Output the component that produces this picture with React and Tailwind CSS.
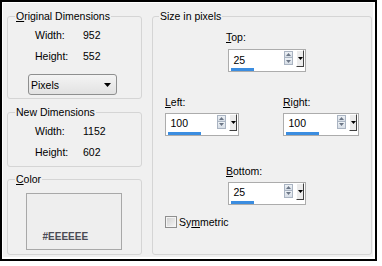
import React from "react";

function SpinUp() {
  return (
    <svg width="5" height="3" viewBox="0 0 5 3">
      <path d="M0 3L2.5 0L5 3Z" fill="#6b7686" />
    </svg>
  );
}
function SpinDown() {
  return (
    <svg width="5" height="3" viewBox="0 0 5 3">
      <path d="M0 0L5 0L2.5 3Z" fill="#6b7686" />
    </svg>
  );
}

function Spinner({ value, widthClass, barClass }) {
  return (
    <div className={`flex h-[23px] border border-[#acacac] bg-white ${widthClass}`}>
      <div className="flex flex-1 flex-col pl-[1.5px] pt-[3.5px]">
        <span className="pl-[3px]">{value}</span>
        <div className={`mt-[2.5px] h-[3px] bg-[#3b8de0] ${barClass}`} />
      </div>
      <div className="mt-[1px] flex w-[9px] flex-col">
        <div className="flex h-[7px] items-center justify-center border border-[#aab4c2] bg-gradient-to-b from-[#eef2f6] to-[#d6dde6]">
          <SpinUp />
        </div>
        <div className="flex h-[7px] items-center justify-center border border-t-0 border-[#aab4c2] bg-gradient-to-b from-[#eef2f6] to-[#d6dde6]">
          <SpinDown />
        </div>
      </div>
      <div className="ml-[3px] mr-[1px] flex h-[17px] w-[8px] items-center justify-center border border-t-white border-l-white border-r-[#404040] border-b-[#404040] bg-[#ececec]">
        <svg width="5" height="3" viewBox="0 0 5 3">
          <path d="M0 0L5 0L2.5 3Z" fill="#000" />
        </svg>
      </div>
    </div>
  );
}

export default function App() {
  return (
    <div className="h-[266px] w-[382px] bg-white">
      <div className="h-[261px] w-[377px] border-2 border-black">
        <div className="flex h-full gap-[10px] border-t border-l border-r-2 border-b-2 border-white bg-[#f0f0f0] pl-[4px] pt-[7px] font-['Liberation_Sans',Arial,sans-serif] text-[10.5px] leading-[12px] text-black">
          {/* Left column */}
          <div className="flex w-[135px] flex-col">
            <fieldset className="h-[89px] rounded-[3px] border border-[#d5d5d5] px-[7px]">
              <legend className="px-[1px]">
                <u>O</u>riginal Dimensions
              </legend>
              <div className="ml-[20px] mt-[6.5px] grid grid-cols-[48px_auto] gap-y-[9px]">
                <span>Width:</span>
                <span>952</span>
                <span>Height:</span>
                <span>552</span>
              </div>
              <div className="ml-[13px] mt-[12.5px] flex h-[21px] w-[89px] items-center justify-between rounded-[3px] border border-[#8e8f8f] bg-gradient-to-b from-[#f4f4f4] to-[#e2e2e2] pl-[2px] pr-[5px]">
                <span>Pixels</span>
                <svg width="7" height="4" viewBox="0 0 7 4">
                  <path d="M0 0H7L3.5 4Z" fill="#000" />
                </svg>
              </div>
            </fieldset>

            <fieldset className="mt-[7px] h-[61px] rounded-[3px] border border-[#d5d5d5] px-[7px]">
              <legend className="px-[1px]">New Dimensions</legend>
              <div className="ml-[20px] mt-[6.5px] grid grid-cols-[48px_auto] gap-y-[9px]">
                <span>Width:</span>
                <span>1152</span>
                <span>Height:</span>
                <span>602</span>
              </div>
            </fieldset>

            <fieldset className="mt-[6px] h-[82px] rounded-[3px] border border-[#d5d5d5] px-[7px]">
              <legend className="px-[1px]">
                <u>C</u>olor
              </legend>
              <div className="ml-[11px] mt-[8px] h-[57px] w-[96px] border border-[#a8a8a8] bg-[#eeeeee] pl-[15.5px] pt-[36px]">
                <span className="text-[10px] font-bold leading-[12px] text-[#4a4a54]">#EEEEEE</span>
              </div>
            </fieldset>
          </div>

          {/* Right column */}
          <fieldset className="h-[245px] w-[220px] rounded-[3px] border border-[#d5d5d5] px-[6px]">
            <legend className="px-[1px]">Size in pixels</legend>

            <div className="ml-[67px] mt-[8.5px] flex flex-col">
              <span>
                <u>T</u>op:
              </span>
              <div className="ml-[2px] mt-[6.5px]">
                <Spinner value="25" widthClass="w-[78px]" barClass="w-[23px]" />
              </div>
            </div>

            <div className="ml-[6px] mt-[24px] flex">
              <div className="flex w-[118px] flex-col">
                <span>
                  <u>L</u>eft:
                </span>
                <div className="mt-[4.5px]">
                  <Spinner value="100" widthClass="w-[74px]" barClass="w-[33px]" />
                </div>
              </div>
              <div className="flex flex-col">
                <span>
                  <u>R</u>ight:
                </span>
                <div className="mt-[4.5px]">
                  <Spinner value="100" widthClass="w-[76px]" barClass="w-[33px]" />
                </div>
              </div>
            </div>

            <div className="ml-[67px] mt-[29.5px] flex flex-col">
              <span>
                <u>B</u>ottom:
              </span>
              <div className="ml-[2px] mt-[4.5px]">
                <Spinner value="25" widthClass="w-[78px]" barClass="w-[23px]" />
              </div>
            </div>

            <div className="ml-[6px] mt-[11.5px] flex items-center gap-[2px]">
              <div className="h-[12px] w-[12px] border border-[#8f8f8f] bg-gradient-to-br from-[#cdcdcd] to-[#f8f8f8] shadow-[inset_0_0_0_1px_#f4f4f4]" />
              <span>
                Sy<u>m</u>metric
              </span>
            </div>
          </fieldset>
        </div>
      </div>
    </div>
  );
}
